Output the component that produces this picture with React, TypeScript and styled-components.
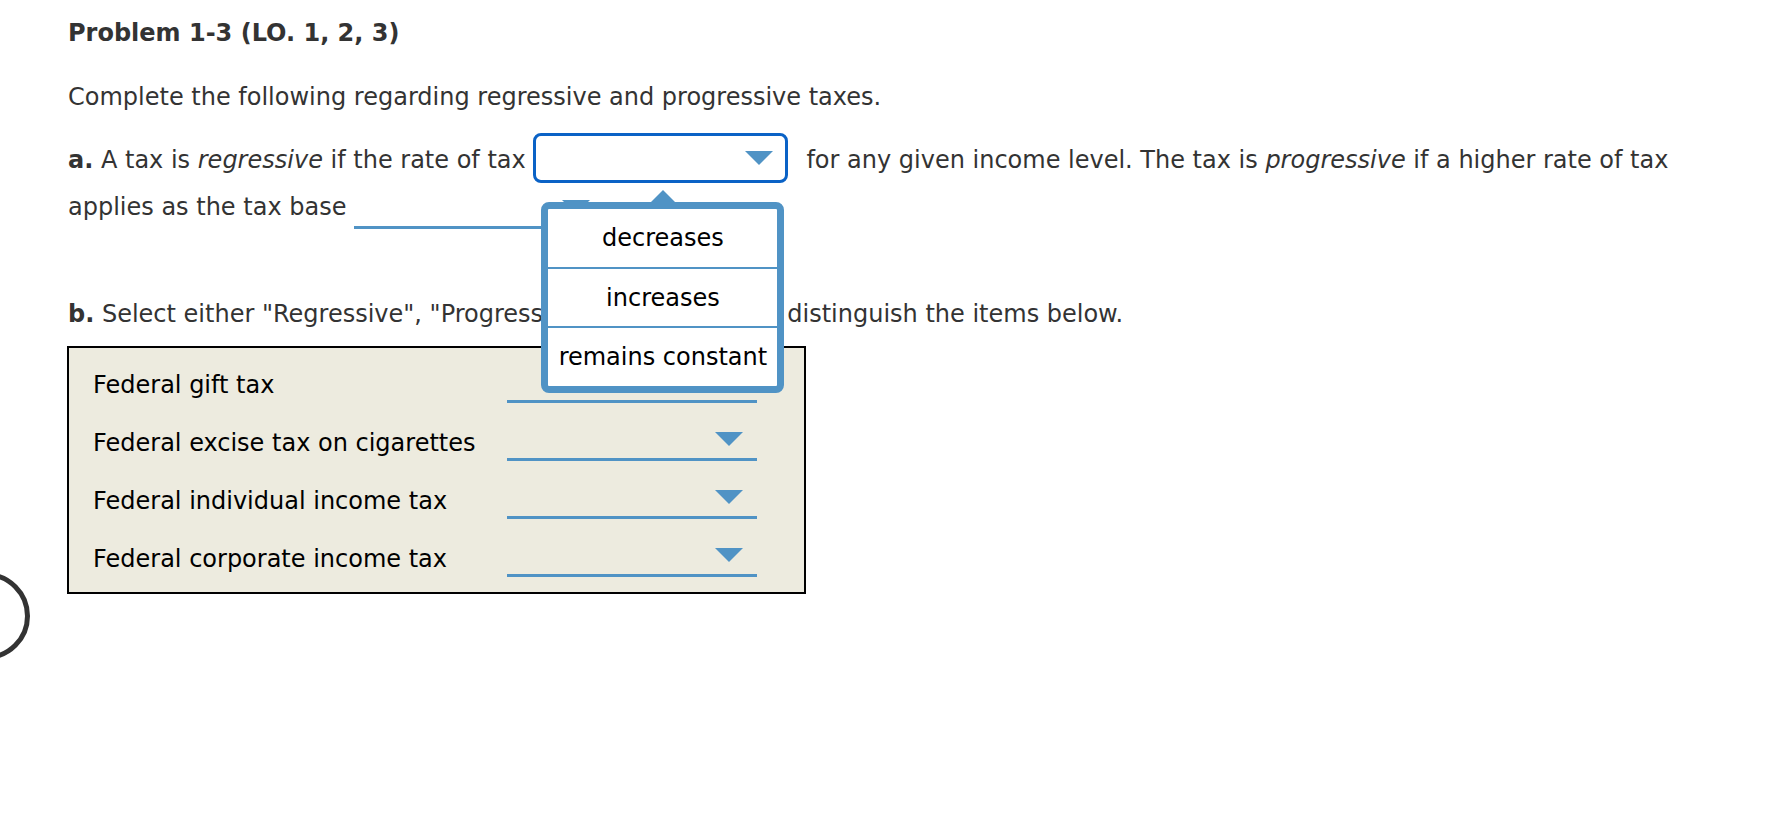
import React from 'react';
import styled, { createGlobalStyle } from 'styled-components';

const lineBlue = '#5093c5';
const focusBlue = '#0a62c6';

const GlobalStyle = createGlobalStyle`
  html, body {
    margin: 0;
    padding: 0;
    background: #fff;
  }

  body {
    position: relative;
    width: 1770px;
    height: 838px;
    overflow: hidden;
    font-family: "DejaVu Sans", Verdana, sans-serif;
    font-size: 24px;
    color: #333;
  }
`;

const Page = styled.main`
  padding: 19px 0 0 68px;
`;

const Title = styled.h1`
  margin: 0;
  font-size: 24px;
  font-weight: bold;
  line-height: 28px;
`;

const Intro = styled.p`
  margin: 36px 0 0;
  line-height: 28px;
`;

const PartA = styled.p`
  margin: 26px 0 0;
  max-width: 1652px;
  line-height: 47px;
`;

const PartB = styled.p`
  margin: 69px 0 0;
  line-height: 28px;
`;

const Arrow = () => (
  <svg width="28" height="14" viewBox="0 0 28 14" aria-hidden="true">
    <polygon points="0,0 28,0 14,14" fill={lineBlue} />
  </svg>
);

const FocusSelect = styled.span`
  position: relative;
  display: inline-flex;
  align-items: center;
  justify-content: flex-end;
  box-sizing: border-box;
  width: 255px;
  height: 50px;
  margin: -4px 18px -1px 0;
  padding-right: 12px;
  vertical-align: top;
  border: 3px solid ${focusBlue};
  border-radius: 8px;
  background: #fff;
`;

const LineSelect = styled.span`
  display: inline-flex;
  align-items: flex-end;
  justify-content: flex-end;
  box-sizing: border-box;
  width: 250px;
  height: 45px;
  padding: 0 14px 12px 0;
  vertical-align: top;
  border-bottom: 3px solid ${lineBlue};
`;

const Menu = styled.ul`
  position: absolute;
  top: 66px;
  left: 5px;
  z-index: 2;
  display: flex;
  flex-direction: column;
  box-sizing: border-box;
  width: 243px;
  height: 191px;
  margin: 0;
  padding: 0;
  list-style: none;
  background: #fff;
  border: 7px solid ${lineBlue};
  border-radius: 8px;

  &::before {
    content: '';
    position: absolute;
    top: -19px;
    left: 50%;
    margin-left: -12px;
    border-left: 12px solid transparent;
    border-right: 12px solid transparent;
    border-bottom: 12px solid ${lineBlue};
  }
`;

const MenuItem = styled.li`
  display: flex;
  flex: 1;
  align-items: center;
  justify-content: center;
  color: #000;
  line-height: 28px;
  white-space: nowrap;

  & + & {
    border-top: 2px solid ${lineBlue};
  }
`;

const ItemBox = styled.div`
  display: inline-grid;
  grid-template-columns: 414px 250px;
  row-gap: 13px;
  margin: 18px 0 0 -1px;
  padding: 10px 47px 15px 24px;
  background: #edebdf;
  border: 2px solid #000;
`;

const ItemLabel = styled.span`
  align-self: end;
  margin-bottom: 4px;
  color: #000;
  line-height: 28px;
`;

const EdgeRing = styled.div`
  position: absolute;
  top: 572px;
  left: -58px;
  box-sizing: border-box;
  width: 88px;
  height: 88px;
  border: 5px solid #333;
  border-radius: 50%;
`;

const menuOptions = ['decreases', 'increases', 'remains constant'];

const taxItems = [
  'Federal gift tax',
  'Federal excise tax on cigarettes',
  'Federal individual income tax',
  'Federal corporate income tax',
];

const App: React.FC = () => (
  <>
    <GlobalStyle />
    <Page>
      <Title>Problem 1-3 (LO. 1, 2, 3)</Title>
      <Intro>Complete the following regarding regressive and progressive taxes.</Intro>
      <PartA>
        <b>a.</b> A tax is <i>regressive</i> if the rate of tax{' '}
        <FocusSelect>
          <Arrow />
          <Menu>
            {menuOptions.map((option) => (
              <MenuItem key={option}>{option}</MenuItem>
            ))}
          </Menu>
        </FocusSelect>
        for any given income level. The tax is <i>progressive</i> if a higher rate of tax
        applies as the tax base{' '}
        <LineSelect>
          <Arrow />
        </LineSelect>
      </PartA>
      <PartB>
        <b>b.</b> Select either "Regressive", "Progressive", or "Neither" to distinguish the
        items below.
      </PartB>
      <ItemBox>
        {taxItems.map((item) => (
          <React.Fragment key={item}>
            <ItemLabel>{item}</ItemLabel>
            <LineSelect>
              <Arrow />
            </LineSelect>
          </React.Fragment>
        ))}
      </ItemBox>
    </Page>
    <EdgeRing />
  </>
);

export default App;
